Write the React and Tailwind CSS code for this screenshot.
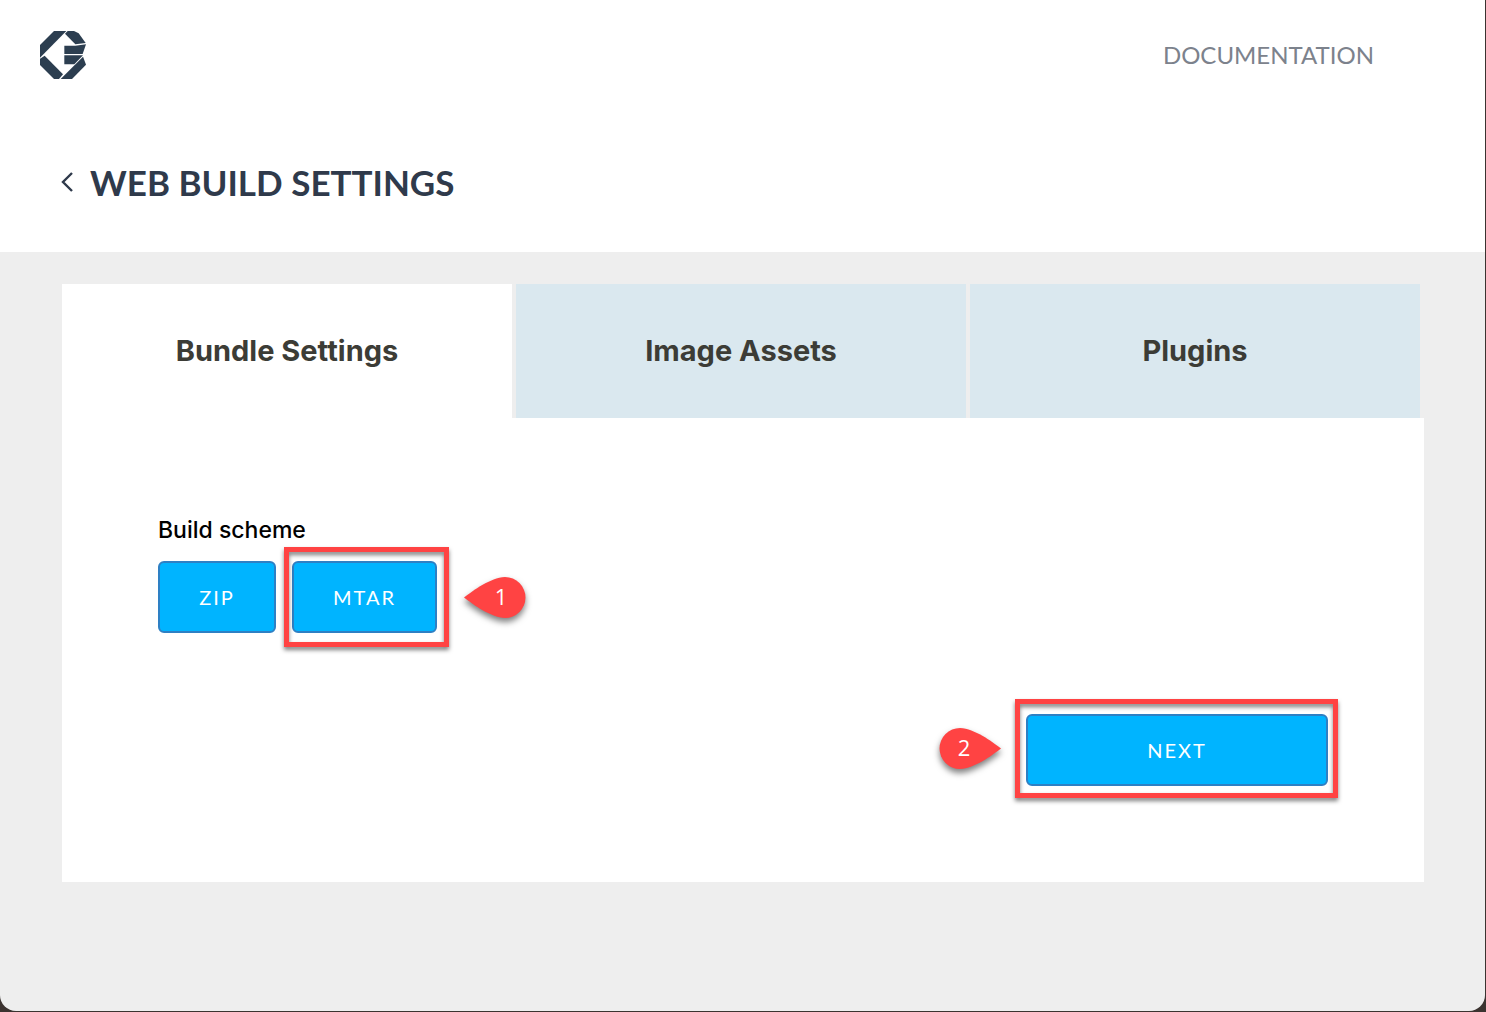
function Logo() {
  return (
    <svg viewBox="30 30 138 144" className="h-12 w-[46px]" fill="#2c3e50" role="img" aria-label="Home">
      <path d="M30 72 72 30H109L30 110Z" />
      <path d="M105 38 113 30H132L146 37 167 66 136 70Z" />
      <path d="M103 74H136L168 70 158 99H103Z" />
      <path d="M103 103H159L133 130H103Z" />
      <path d="M30 113 44 104 99 160 87 174H72L30 132Z" />
      <path d="M92 174 159 107 168 131 126 174Z" />
    </svg>
  );
}

function Highlight({ className }) {
  return (
    <span
      aria-hidden="true"
      className={`pointer-events-none absolute border-5 border-[#ff4343] drop-shadow-[0_3px_2px_rgba(0,0,0,0.5)] ${className}`}
    />
  );
}

function Pin({ number, flip, className }) {
  return (
    <span className={`absolute flex h-[41px] w-[62px] items-center ${className}`}>
      <span className="absolute inset-0 drop-shadow-[0_4px_3px_rgba(0,0,0,0.5)]">
        <svg viewBox="0 0 62 41" aria-hidden="true" className={flip ? "rotate-180" : ""}>
          <path d="M0 20.5C10 13 26 1 41 0A20.5 20.5 0 0 1 41 41C26 40 10 28 0 20.5Z" fill="#ff4343" />
        </svg>
      </span>
      <span
        className={`relative w-[50px] pb-1 text-center font-['Open_Sans',sans-serif] text-[22px] leading-none text-white ${flip ? "" : "ml-3"}`}
      >
        {number}
      </span>
    </span>
  );
}

function ActionButton({ children, className }) {
  return (
    <button
      type="button"
      className={`block h-[72px] rounded-md border-2 border-[#2e80c4] bg-[#00b4ff] text-xl tracking-widest text-white ${className}`}
    >
      {children}
    </button>
  );
}

function Tab({ label, selected }) {
  return (
    <button
      type="button"
      role="tab"
      aria-selected={selected}
      className={`mr-1 h-[134px] font-['Inter',sans-serif] text-[29px] font-bold text-[#3c3c36] ${selected ? "bg-white" : "bg-[#dae8ef]"}`}
    >
      {label}
    </button>
  );
}

export default function App() {
  return (
    <div className="flex min-h-screen flex-col bg-[#3b3330] pr-px pb-px font-['Lato','Open_Sans',sans-serif]">
      <div className="flex flex-1 flex-col overflow-hidden rounded-b-2xl bg-[#eeeeee]">
        <header className="bg-white pb-[50px]">
          <nav className="flex h-[110px] items-center justify-between pr-[111px] pb-px pl-10">
            <a href="#home" className="block">
              <Logo />
            </a>
            <a href="#documentation" className="text-2xl text-[#7c828c]">
              DOCUMENTATION
            </a>
          </nav>
          <div className="mt-[52px] flex items-center gap-4 pl-[60px]">
            <a href="#back" aria-label="Back">
              <svg viewBox="0 0 14 20" className="h-5 w-3.5" fill="none" stroke="#2f3a4b" strokeWidth="2.4">
                <path d="M12 1 3 10l9 9" />
              </svg>
            </a>
            <h1 className="text-[35px] leading-10 font-bold text-[#2f3a4b]">WEB BUILD SETTINGS</h1>
          </div>
        </header>

        <main className="pt-8 pr-[61px] pb-32 pl-[62px]">
          <div role="tablist" className="grid grid-cols-3">
            <Tab label="Bundle Settings" selected />
            <Tab label="Image Assets" selected={false} />
            <Tab label="Plugins" selected={false} />
          </div>
          <section className="bg-white p-24">
            <h2 id="scheme" className="font-['Inter',sans-serif] text-[23px] leading-8 font-medium text-black">
              Build scheme
            </h2>
            <div role="group" aria-labelledby="scheme" className="mt-[15px] flex gap-4">
              <ActionButton className="w-[118px]">ZIP</ActionButton>
              <div className="relative">
                <ActionButton className="w-[145px]">MTAR</ActionButton>
                <Highlight className="-top-3.5 -right-3 -bottom-3.5 -left-2" />
                <Pin number={1} className="top-4 left-[172px]" />
              </div>
            </div>
            <div className="mt-[81px] flex justify-end">
              <div className="relative">
                <ActionButton className="w-[302px]">NEXT</ActionButton>
                <Highlight className="-top-[15px] -right-2.5 -bottom-3 -left-[11px]" />
                <Pin number={2} flip className="top-3.5 right-[327px]" />
              </div>
            </div>
          </section>
        </main>
      </div>
    </div>
  );
}
